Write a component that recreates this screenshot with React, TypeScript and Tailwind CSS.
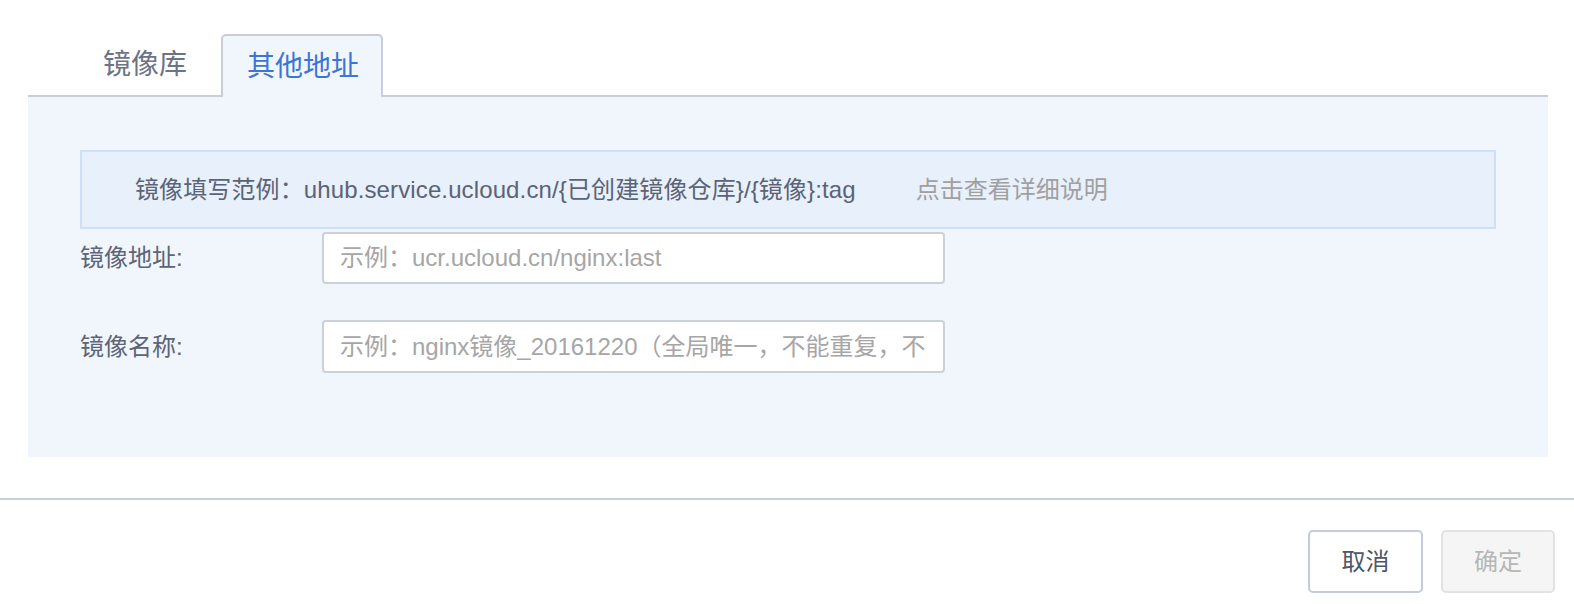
import React, { useState } from "react";

export default function App() {
  const [tab, setTab] = useState("other");
  const [addr, setAddr] = useState("");
  const [name, setName] = useState("");

  const font = "font-['Liberation_Sans','Noto_Sans_CJK_SC',sans-serif]";

  return (
    <div className={`w-[1574px] h-[604px] bg-white ${font}`}>
      <div className="pt-[34px] pl-[28px] w-[1548px]">
        {/* tabs */}
        <div className="flex items-end h-[63px] border-b-2 border-[#c9cddb] pl-[50px] gap-[9px]">
          <button
            onClick={() => setTab("repo")}
            className="h-[61px] px-[25px] flex items-center text-[28px] text-[#6b7385]"
          >
            镜像库
          </button>
          <button
            onClick={() => setTab("other")}
            className="relative h-[63px] -mb-[2px] pl-[24px] pr-[22px] flex items-center text-[28px] text-[#3d75d4] bg-[#f1f5fc] border-2 border-b-0 border-[#c9cddb] rounded-t-[5px]"
          >
            其他地址
          </button>
        </div>

        {/* panel */}
        <div className="h-[360px] bg-[#f1f5fc] pt-[53px] px-[52px]">
          <div className="h-[79px] flex items-center pl-[53px] border-2 border-[#cde0f6] bg-[#e8f0fb] text-[24px] text-[#5b6376]">
            <span className="tracking-[0.12px]">镜像填写范例：uhub.service.ucloud.cn/{"{"}已创建镜像仓库{"}"}/{"{"}镜像{"}"}:tag</span>
            <a href="#" className="ml-[60px] text-[#a0a0a0]">点击查看详细说明</a>
          </div>

          <div className="mt-[3px] flex items-center">
            <label className="w-[242px] text-[24px] text-[#5c6477]">镜像地址:</label>
            <input
              value={addr}
              onChange={(e) => setAddr(e.target.value)}
              placeholder="示例：ucr.ucloud.cn/nginx:last"
              className="w-[623px] h-[52px] px-[16px] bg-white border-2 border-[#ccd0d9] rounded-[4px] text-[24px] text-[#4e5669] placeholder:text-[#a6a6a6] outline-none"
            />
          </div>

          <div className="mt-[36px] flex items-center">
            <label className="w-[242px] text-[24px] text-[#5c6477]">镜像名称:</label>
            <input
              value={name}
              onChange={(e) => setName(e.target.value)}
              placeholder="示例：nginx镜像_20161220（全局唯一，不能重复，不可修改）"
              className="w-[623px] h-[53px] px-[16px] bg-white border-2 border-[#ccd0d9] rounded-[4px] text-[24px] text-[#4e5669] placeholder:text-[#a6a6a6] outline-none"
            />
          </div>
        </div>
      </div>

      <div className="mt-[41px] h-[2px] bg-[#cbcedd]" />

      <div className="mt-[30px] flex justify-end gap-[18px] pr-[19px]">
        <button className="w-[115px] h-[63px] bg-white border-2 border-[#c6cbdb] rounded-[5px] text-[24px] text-[#4e5669]">
          取消
        </button>
        <button
          disabled
          className="w-[114px] h-[63px] bg-[#f5f5f5] border-2 border-[#e2e2e2] rounded-[5px] text-[24px] text-[#b6b6b6]"
        >
          确定
        </button>
      </div>
    </div>
  );
}
